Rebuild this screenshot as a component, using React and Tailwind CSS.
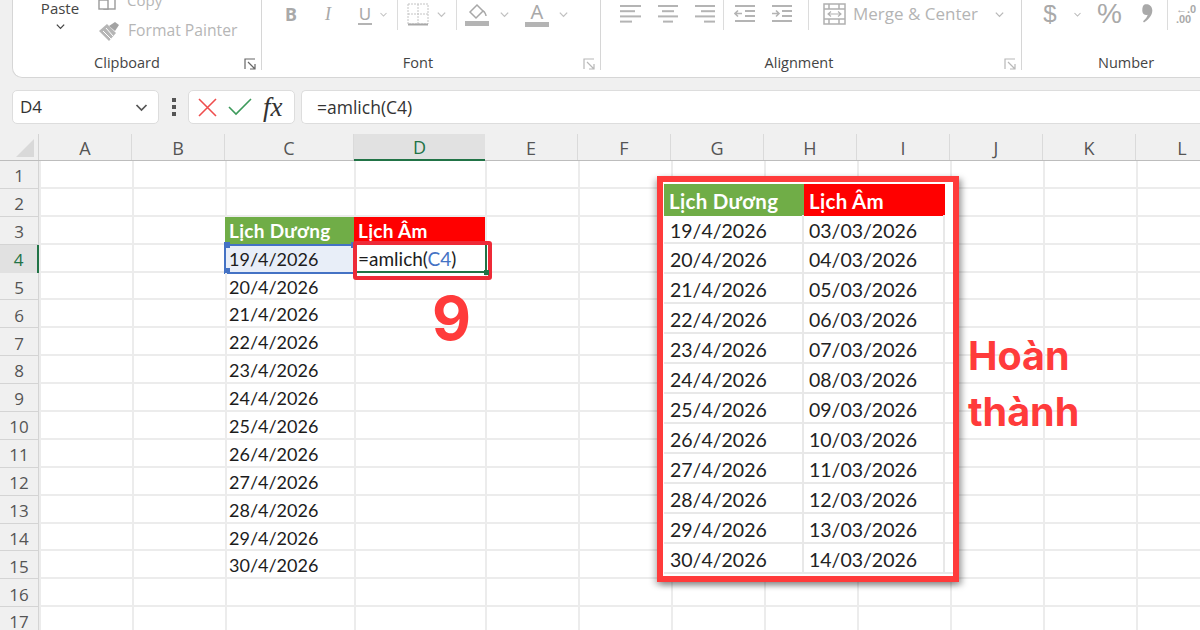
const colWidths = [93, 93, 129, 131, 93, 93, 93, 93, 93, 93, 93, 93];
const colNames = ["A", "B", "C", "D", "E", "F", "G", "H", "I", "J", "K", "L"];
const rowNumbers = Array.from({ length: 17 }, (_, i) => i + 1);
const solarDates = [
  "19/4/2026", "20/4/2026", "21/4/2026", "22/4/2026", "23/4/2026", "24/4/2026",
  "25/4/2026", "26/4/2026", "27/4/2026", "28/4/2026", "29/4/2026", "30/4/2026",
];
const lunarDates = [
  "03/03/2026", "04/03/2026", "05/03/2026", "06/03/2026", "07/03/2026", "08/03/2026",
  "09/03/2026", "10/03/2026", "11/03/2026", "12/03/2026", "13/03/2026", "14/03/2026",
];

const uiFont = "font-['Open_Sans','Noto_Sans',sans-serif]";
const cellFont = "font-['Lato','Liberation_Sans',sans-serif]";

function Chevron({ className = "", size = 11 }) {
  return (
    <svg width={size} height={size} viewBox="0 0 12 12" className={className} fill="none" stroke="currentColor" strokeWidth="1.4">
      <path d="M2 4l4 4 4-4" />
    </svg>
  );
}

function Launcher({ dark }) {
  return (
    <svg width="13" height="13" viewBox="0 0 13 13" fill="none" stroke={dark ? "#666" : "#b8b8b8"} strokeWidth="1.2">
      <path d="M1 11V1h10" />
      <path d="M4 4l7 7M11 6v5H6" />
    </svg>
  );
}

function AlignIcon({ lines }) {
  return (
    <svg width="22" height="20" viewBox="0 0 22 20" stroke="#b4b4b4" strokeWidth="2">
      {lines.map(([a, b], i) => (
        <line key={i} x1={a} x2={b} y1={2 + i * 5.2} y2={2 + i * 5.2} />
      ))}
    </svg>
  );
}

function IndentIcon({ flip }) {
  return (
    <svg width="22" height="20" viewBox="0 0 22 20" fill="none" stroke="#b4b4b4" strokeWidth="1.6">
      <line x1="1" x2="21" y1="2" y2="2" strokeWidth="2" />
      <line x1="11" x2="21" y1="7" y2="7" strokeWidth="2" />
      <line x1="11" x2="21" y1="12" y2="12" strokeWidth="2" />
      <line x1="1" x2="21" y1="17" y2="17" strokeWidth="2" />
      {flip ? <path d="M1 9.5h7M5 6.5l3 3-3 3" /> : <path d="M8 9.5H1M4 6.5l-3 3 3 3" />}
    </svg>
  );
}

function Separator({ className = "" }) {
  return <div className={`w-px h-[32px] bg-[#dcdcdc] shrink-0 ${className}`} />;
}

function RibbonGroup({ width, label, launcher, launcherDark, labelCenter, children }) {
  return (
    <div className="h-[70px] flex flex-col border-r border-[#d6d6d6] shrink-0" style={{ width }}>
      <div className="h-[54px] flex items-start">{children}</div>
      <div className="h-[16px] flex items-center relative">
        <div className="text-[14.5px] leading-[18px] text-[#444] text-center mt-[2px]" style={{ width: labelCenter * 2 }}>
          {label}
        </div>
        {launcher && (
          <div className="ml-auto mr-[4px] mt-[5px]">
            <Launcher dark={launcherDark} />
          </div>
        )}
      </div>
    </div>
  );
}

function Ribbon() {
  return (
    <div className={`h-[78px] ml-[12px] bg-white rounded-bl-[10px] border-b border-l border-[#d6d6d6] overflow-hidden flex ${uiFont}`}>
      <RibbonGroup width={249} label="Clipboard" labelCenter={114} launcher launcherDark>
        <div className="ml-[27px] w-[40px] flex flex-col items-center text-[#444]">
          <div className="text-[15px] leading-[16px]">Paste</div>
          <Chevron className="mt-[5px] text-[#444]" />
        </div>
        <div className="ml-[18px] -mt-[15px] flex flex-col text-[#b6b6b6]">
          <div className="h-[31px] flex items-center gap-[7px]">
            <svg width="22" height="20" viewBox="0 0 22 20" fill="none" stroke="#9a9a9a" strokeWidth="1.4">
              <rect x="6" y="1" width="11" height="17" />
              <rect x="1" y="9" width="9" height="9" fill="#fff" />
            </svg>
            <span className="text-[15px] leading-none">Copy</span>
          </div>
          <div className="h-[30px] flex items-center gap-[6px]">
            <svg width="24" height="22" viewBox="0 0 24 22">
              <path d="M1 11l8-7 9 9-7 8z" fill="#b5b5b5" />
              <path d="M11 6l6-4 4 3-4 6z" fill="#a3a3a3" />
              <path d="M5 11l8 8M8 8l7 8" stroke="#fff" strokeWidth="1" />
            </svg>
            <span className="text-[15.7px] leading-none">Format Painter</span>
          </div>
        </div>
      </RibbonGroup>

      <RibbonGroup width={339} label="Font" labelCenter={156} launcher>
        <div className="flex items-center h-[28px] text-[#a9a9a9] font-['Noto_Sans',sans-serif]">
          <span className="ml-[22px] w-[14px] text-center text-[18px] font-bold">B</span>
          <span className="ml-[23px] w-[14px] text-center text-[18px] italic font-['Liberation_Serif',serif]">I</span>
          <span className="ml-[23px] w-[14px] text-center text-[17px] leading-[19px] border-b-2 border-[#b4b4b4]">U</span>
          <Chevron className="ml-[7px] text-[#c0c0c0]" size={9} />
          <Separator className="ml-[9px]" />
          <svg width="23" height="23" viewBox="0 0 23 23" className="ml-[9px]" fill="none" stroke="#c4c4c4" strokeWidth="1" strokeDasharray="2 1">
            <rect x="1" y="1" width="20" height="20" />
            <path d="M11 1v20M1 11h20" />
            <path d="M1 21.5h20" stroke="#a8a8a8" strokeWidth="2" strokeDasharray="none" />
          </svg>
          <Chevron className="ml-[6px] text-[#c0c0c0]" />
          <Separator className="ml-[9px]" />
          <svg width="24" height="24" viewBox="0 0 24 24" className="ml-[8px] mt-[1px]" fill="none">
            <path d="M5 9l7-7 6 6-7 7z" stroke="#a8a8a8" strokeWidth="1.5" />
            <path d="M18 8c2 1 3 4 3 5" stroke="#a8a8a8" strokeWidth="1.5" />
            <rect x="0" y="18" width="24" height="5" fill="#b4b4b4" />
          </svg>
          <Chevron className="ml-[10px] text-[#c0c0c0]" />
          <div className="ml-[15px] w-[24px] flex flex-col items-center">
            <span className="text-[20px] leading-[20px] text-[#a9a9a9]">A</span>
            <div className="w-[24px] h-[5px] bg-[#b4b4b4]" />
          </div>
          <Chevron className="ml-[9px] text-[#c0c0c0]" />
        </div>
      </RibbonGroup>

      <RibbonGroup width={421} label="Alignment" labelCenter={198} launcher>
        <div className="flex items-center h-[28px] text-[#b4b4b4]">
          <div className="ml-[19px]"><AlignIcon lines={[[0, 21], [0, 15], [0, 21], [0, 12]]} /></div>
          <div className="ml-[15px]"><AlignIcon lines={[[1, 21], [5, 17], [1, 21], [6, 16]]} /></div>
          <div className="ml-[15px]"><AlignIcon lines={[[1, 21], [7, 21], [1, 21], [10, 21]]} /></div>
          <Separator className="ml-[7px]" />
          <div className="ml-[10px]"><IndentIcon /></div>
          <div className="ml-[15px]"><IndentIcon flip /></div>
          <Separator className="ml-[15px] h-[40px] mt-[-8px]" />
          <svg width="23" height="22" viewBox="0 0 23 22" className="ml-[14px]" fill="none" stroke="#b0b0b0" strokeWidth="1.5">
            <rect x="1" y="1" width="21" height="20" />
            <path d="M1 6h21M1 16h21M6 1v5M16 1v5M6 16v5M16 16v5" />
            <path d="M5 11h13M8 8.5L5 11l3 2.5M15 8.5l3 2.5-3 2.5" strokeWidth="1.1" />
          </svg>
          <span className="ml-[7px] text-[17px] text-[#b4b4b4] whitespace-nowrap">Merge &amp; Center</span>
          <Chevron className="ml-[16px] text-[#b8b8b8]" />
        </div>
      </RibbonGroup>

      <div className="h-[70px] flex flex-col flex-1 min-w-0">
        <div className="h-[54px] flex items-start text-[#a9a9a9]">
          <div className="h-[28px] flex items-center">
            <span className="ml-[20px] text-[24px] w-[16px] text-center font-['Liberation_Sans',sans-serif]">$</span>
            <Chevron className="ml-[15px] text-[#b8b8b8]" size={9} />
            <span className="ml-[15px] text-[28px] leading-none font-['Liberation_Sans',sans-serif]">%</span>
            <svg width="11" height="20" viewBox="0 0 11 20" className="ml-[20px]" fill="#a9a9a9">
              <path d="M2.5 0.5c3.5-1 7.5 1 7.8 5.5.2 5-3.3 9-8.3 12.500l-1-1.200c2.700-2.300 4.200-4.300 4.700-6.500-2.700.8-5.200-.8-5.400-3.900C.2 3.800 1 1.200 2.500.5z" />
            </svg>
            <Separator className="ml-[14px]" />
            <div className="ml-[8px] text-[11px] leading-[10px] font-['Liberation_Sans',sans-serif] font-bold whitespace-nowrap">
              ←.0
              <br />
              .00
            </div>
          </div>
        </div>
        <div className="h-[16px] text-[14.5px] leading-[18px] text-[#444] ml-[76px] mt-[2px]">Number</div>
      </div>
    </div>
  );
}

function FormulaBar() {
  return (
    <div className={`mt-[12px] ml-[12px] h-[34px] flex items-stretch ${uiFont}`}>
      <div className="w-[147px] bg-white rounded-[5px] border border-[#dddddd] flex items-center pl-[7px] pr-[9px] text-[17px] text-[#333]">
        D4
        <Chevron className="ml-auto text-[#555]" size={15} />
      </div>
      <div className="w-[29px] flex flex-col items-center justify-center gap-[3px]">
        <div className="w-[4px] h-[4px] bg-[#555]" />
        <div className="w-[4px] h-[4px] bg-[#555]" />
        <div className="w-[4px] h-[4px] bg-[#555]" />
      </div>
      <div className="w-[107px] bg-white rounded-[5px] border border-[#dddddd] flex items-center pl-[9px]">
        <svg width="19" height="19" viewBox="0 0 19 19" stroke="#ef4d4d" strokeWidth="1.6">
          <path d="M1 1l17 17M18 1L1 18" />
        </svg>
        <svg width="24" height="18" viewBox="0 0 24 18" fill="none" stroke="#3d9a5b" strokeWidth="1.6" className="ml-[11px]">
          <path d="M1 9l7 7L23 1" />
        </svg>
        <span className="ml-[11px] text-[27px] leading-none font-['Liberation_Serif',serif] italic text-[#333]">fx</span>
      </div>
      <div className="ml-[6px] flex-1 bg-white rounded-l-[5px] border-y border-l border-[#dddddd] flex items-center pl-[15px] text-[17.5px] text-[#333]">
        =amlich(C4)
      </div>
    </div>
  );
}

function ColumnHeader() {
  return (
    <div className={`mt-[10px] h-[27px] flex border-b border-[#bdbdbd] ${uiFont}`}>
      <div className="w-[39px] shrink-0 border-r border-[#d4d4d4] flex items-center justify-end pr-[4px] pt-[1px]">
        <div className="w-0 h-0 border-l-[18px] border-l-transparent border-b-[18px] border-b-[#d9d9d9]" />
      </div>
      {colNames.map((name, i) => (
        <div
          key={name}
          style={{ width: colWidths[i] }}
          className={
            name === "D"
              ? "shrink-0 flex items-center justify-center pt-[2px] text-[18px] bg-[#e1e1e1] text-[#217346] border-b-2 border-[#217346] h-[27px]"
              : "shrink-0 flex items-center justify-center pt-[2px] text-[18px] text-[#555] border-r border-[#dadada]"
          }
        >
          {name}
        </div>
      ))}
    </div>
  );
}

function SheetCell({ row, col, width }) {
  const base = `shrink-0 relative flex items-center whitespace-nowrap ${cellFont} text-[18px] pl-[2px] pt-[3px] text-[#1c1c1c] border-l-2 border-b-2 border-[#ececec]`;

  if (row === 3 && col === "C") {
    return <div style={{ width }} className={`${base} !border-[#70ad47] bg-[#70ad47] text-white font-bold text-[19px] tracking-[0.3px]`}>Lịch Dương</div>;
  }
  if (row === 3 && col === "D") {
    return <div style={{ width }} className={`${base} !border-[#ff0000] bg-[#ff0000] text-white font-bold text-[19px] tracking-[0.3px]`}>Lịch Âm</div>;
  }
  if (row === 4 && col === "C") {
    return (
      <div style={{ width }} className={`${base} !border-transparent bg-[#e8eef8] outline-2 outline-[#4472c4] -outline-offset-1`}>
        19/4/2026
        <span className="absolute -left-[3px] -top-[3px] w-[6px] h-[6px] bg-[#4472c4]" />
        <span className="absolute -left-[3px] -bottom-[3px] w-[6px] h-[6px] bg-[#4472c4]" />
        <span className="absolute -right-[3px] -top-[3px] w-[6px] h-[6px] bg-[#4472c4]" />
      </div>
    );
  }
  if (row === 4 && col === "D") {
    return (
      <div style={{ width }} className={`${base} text-[19px] !border-l-transparent !border-b-[#217346]`}>
        <span>=amlich(<span className="text-[#4472c4]">C4</span>)</span>
      </div>
    );
  }
  if (row === 4 && col === "E") {
    return <div style={{ width }} className={`${base} !border-l-[#217346]`} />;
  }
  const text = col === "C" && row >= 5 && row <= 15 ? solarDates[row - 4] : "";
  return <div style={{ width }} className={base}>{text}</div>;
}

function Sheet() {
  return (
    <div className="flex flex-col bg-white">
      {rowNumbers.map((row) => (
        <div key={row} className="flex h-[27.9px]">
          <div
            className={
              row === 4
                ? `w-[39px] shrink-0 flex items-center justify-center pt-[3px] text-[17px] bg-[#e1e1e1] text-[#217346] border-r-2 border-[#217346] ${uiFont}`
                : `w-[39px] shrink-0 flex items-center justify-center pt-[3px] text-[17px] bg-[#f0f0f0] text-[#555] border-r border-b border-[#d4d4d4] ${uiFont}`
            }
          >
            {row}
          </div>
          {colNames.map((col, i) => (
            <SheetCell key={col} row={row} col={col} width={colWidths[i]} />
          ))}
        </div>
      ))}
    </div>
  );
}

function ResultPanel() {
  return (
    <div className={`absolute left-[657px] top-[176px] w-[302px] h-[406px] border-[6px] border-[#ff3b3b] bg-white pl-px pt-[2px] shadow-[3px_3px_6px_rgba(0,0,0,0.35),-3px_3px_6px_rgba(0,0,0,0.2)] ${cellFont} text-[19.5px] text-[#222]`}>
      <div className="flex h-[32px] w-[281px] font-bold text-white text-[20.5px] tracking-[0.3px]">
        <div className="w-[140px] bg-[#70ad47] pl-[5px] pt-[3px] flex items-center">Lịch Dương</div>
        <div className="w-[141px] bg-[#ff0000] pl-[5px] pt-[3px] flex items-center">Lịch Âm</div>
      </div>
      {solarDates.map((date, i) => (
        <div key={date} className={i === 0 ? "flex h-[28.5px] border-b-2 border-[#e8e8e8] -mt-px" : "flex h-[30px] border-b-2 border-[#e8e8e8]"}>
          <div className="w-[140px] pl-[6px] pt-[5px] border-r-2 border-[#e8e8e8] flex items-center">{date}</div>
          <div className="w-[141px] pl-[5px] pt-[5px] border-r-2 border-[#e8e8e8] flex items-center">{lunarDates[i]}</div>
        </div>
      ))}
    </div>
  );
}

export default function App() {
  return (
    <div className="relative w-[1200px] h-[630px] overflow-hidden bg-[#f0f0f0]">
      <Ribbon />
      <FormulaBar />
      <ColumnHeader />
      <Sheet />

      <div className="absolute left-[353px] top-[241px] w-[139px] h-[39px] border-[4px] border-[#ee2a37] rounded-[3px]" />
      <div className="absolute left-[484px] top-[270px] w-[5px] h-[5px] bg-[#217346]" />
      <div className="absolute left-[432px] top-[276px] text-[60px] leading-[84px] font-bold text-[#ff3b3b] font-['Inter',sans-serif]">9</div>

      <ResultPanel />

      <div className="absolute left-[968px] top-[328px] text-[39.5px] leading-[56px] font-bold text-[#ff3b3b] font-['Inter',sans-serif]">
        Hoàn
        <br />
        thành
      </div>
    </div>
  );
}
